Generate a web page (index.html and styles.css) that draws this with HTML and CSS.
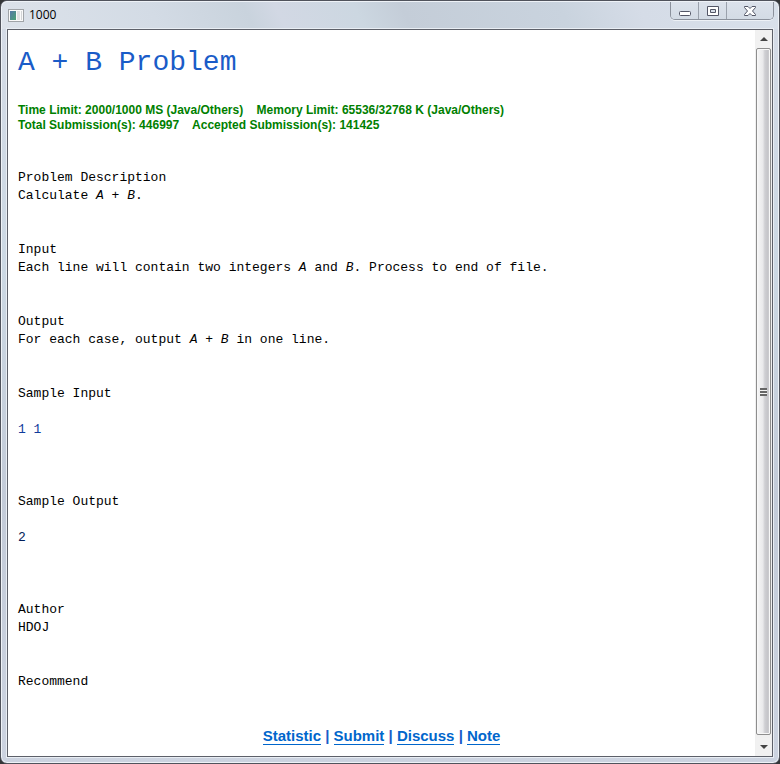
FILE: index.html
```html
<!DOCTYPE html>
<html lang="en">
<head>
<meta charset="utf-8">
<title>1000</title>
<link rel="stylesheet" href="styles.css">
</head>
<body>
<div class="window">
  <header class="titlebar">
    <svg class="app-icon" width="16" height="14" viewBox="0 0 16 14" aria-hidden="true">
      <defs><linearGradient id="pane" x1="0" y1="0" x2="1" y2="1"><stop offset="0" stop-color="#5578a8"/><stop offset="1" stop-color="#4ba273"/></linearGradient></defs>
      <rect x=".5" y=".5" width="15" height="12" fill="#fafafa" stroke="#a0a4a8"/>
      <rect x="2" y="2" width="6" height="9" fill="url(#pane)"/>
      <rect x="9" y="2" width="3" height="9" fill="#e0e1e2"/>
      <rect x="13" y="2" width="1" height="9" fill="#d2d4d6"/>
    </svg>
    <span class="caption">1000</span>
    <div class="controls">
      <button type="button" class="control" aria-label="Minimize">
        <svg width="14" height="12" viewBox="0 0 14 12"><rect x="1.5" y="6.500" width="11" height="4" rx="1" fill="#fff" stroke="#535666"/></svg>
      </button>
      <button type="button" class="control" aria-label="Maximize">
        <svg width="14" height="12" viewBox="0 0 14 12"><path d="M1.500 1.500h11v9h-11zM4.500 4.500v3h5v-3z" fill="#fff" fill-rule="evenodd" stroke="#535666" stroke-linejoin="round"/></svg>
      </button>
      <button type="button" class="control close" aria-label="Close">
        <svg width="14" height="12" viewBox="0 0 14 12"><path d="M1.500 1.500h3.500l2 2 2-2h3.500v1L9.500 6l3 3.500v1H9l-2-2-2 2H1.500v-1l3-3.500-3-3.500z" fill="#fff" stroke="#535666" stroke-linejoin="round"/></svg>
      </button>
    </div>
  </header>
  <div class="client">
    <main class="page">
      <h1>A + B Problem</h1>
      <p class="limits">Time Limit: 2000/1000 MS (Java/Others)&nbsp;&nbsp;&nbsp; Memory Limit: 65536/32768 K (Java/Others)<br>Total Submission(s): 446997&nbsp;&nbsp;&nbsp; Accepted Submission(s): 141425</p>
      <section><h2>Problem Description</h2><p>Calculate <i>A + B</i>.</p></section>
      <section><h2>Input</h2><p>Each line will contain two integers <i>A</i> and <i>B</i>. Process to end of file.</p></section>
      <section><h2>Output</h2><p>For each case, output <i>A + B</i> in one line.</p></section>
      <section><h2>Sample Input</h2><pre class="first">1 1</pre></section>
      <section><h2>Sample Output</h2><pre>2</pre></section>
      <section><h2>Author</h2><p>HDOJ</p></section>
      <section><h2>Recommend</h2></section>
      <nav class="links"><a href="#statistic">Statistic</a> | <a href="#submit">Submit</a> | <a href="#discuss">Discuss</a> | <a href="#note">Note</a></nav>
    </main>
    <div class="scrollbar">
      <button type="button" class="arrow" aria-label="Scroll up"><svg width="8" height="4" viewBox="0 0 8 4"><path d="M0 4l4-4 4 4z" fill="#444"/></svg></button>
      <div class="thumb"><span class="grip"></span></div>
      <button type="button" class="arrow" aria-label="Scroll down"><svg width="8" height="4" viewBox="0 0 8 4"><path d="M0 0l4 4 4-4z" fill="#444"/></svg></button>
    </div>
  </div>
</div>
</body>
</html>
```
FILE: styles.css
```css
* { box-sizing: border-box; }

body {
  margin: 0;
  background: #343638;
}

.window {
  display: flex;
  flex-direction: column;
  min-height: 100vh;
  padding: 0 6px 6px;
  border: 1px solid #50535c;
  border-radius: 7px;
  background: linear-gradient(180deg, #d5dbe6 0, #ccd8e3 35%, #c3cbd8 65%, #ccd3e0 100%);
  box-shadow: inset 0 0 0 1px #eef2f7;
}

.titlebar {
  display: flex;
  align-items: flex-start;
  height: 28px;
  margin: 0 -5px;
  padding: 0 4px 0 5px;
  border-top: 1px solid #eef2f7;
  border-radius: 6px 6px 0 0;
  background: linear-gradient(65deg, #dce2ea 0%, #d3dbe5 20%, #c9d3dd 32%, #d2d8e4 36%, #ccd7e1 46%, #c4cdd8 52%, #c9d3de 72%, #d5dce7 82%, #d8e0ea 100%);
}

.app-icon { margin: 7px 0 0 1px; }

.caption {
  margin: 4px 0 0 5px;
  font: 12px/18px "Open Sans", sans-serif;
  color: #000;
}

.controls {
  display: flex;
  height: 18px;
  margin-left: auto;
  border: 1px solid #8b919c;
  border-top: 0;
  border-radius: 0 0 5px 5px;
  box-shadow: 0 1px 0 #edf1f6;
  overflow: hidden;
}

.control {
  display: flex;
  align-items: center;
  justify-content: center;
  width: 28px;
  padding: 0;
  border: 0;
  border-right: 1px solid #9aa1ac;
  background: linear-gradient(#dce2eb, #d3dbe5);
}

.close {
  width: 46px;
  border-right: 0;
}

.client {
  display: flex;
  flex: 1;
  border: 1px solid #5d6069;
  background: #fff;
  box-shadow: 0 0 0 1px #e9eef4;
}

.page {
  flex: 1;
  padding: 17px 10px 11px;
  font: 13px/18px "Liberation Mono", monospace;
  color: #000;
}

h1 {
  margin: 0 0 24px;
  font-size: 28px;
  font-weight: 400;
  line-height: 32px;
  color: #1a5cc8;
}

.limits {
  margin: 0 0 36px;
  font: bold 12px/15px "Liberation Sans", sans-serif;
  color: #008000;
}

section { margin-bottom: 36px; }

h2, section p {
  margin: 0;
  font-size: 13px;
  font-weight: 400;
  line-height: 18px;
}

pre {
  margin: 18px 0 54px;
  font: 13px/18px "Liberation Mono", monospace;
  color: #001c58;
}

.first { color: #103c9c; }

.links {
  text-align: center;
  font: bold 15px/18px "Liberation Sans", sans-serif;
  color: #1a5cc8;
}

.links a {
  color: #0066cc;
  text-decoration: none;
  border-bottom: 1px solid #0066cc;
}

.scrollbar {
  display: flex;
  flex-direction: column;
  width: 17px;
  padding: 0 1px;
  background: #f0f0f0;
}

.arrow {
  display: flex;
  align-items: center;
  justify-content: center;
  height: 18px;
  padding: 0;
  border: 0;
  background: #f1f1f1;
}

.thumb {
  display: flex;
  flex: 1;
  align-items: center;
  justify-content: center;
  margin-bottom: 3px;
  border: 1px solid #8e8e8e;
  border-radius: 2px;
  background: linear-gradient(90deg, #f7f7f7, #e9e9eb 45%, #cfcfd3 60%, #c4c4c8 85%, #dedee0);
  box-shadow: inset 0 0 0 1px #f8f8f8;
}

.grip {
  width: 7px;
  height: 8px;
  background: repeating-linear-gradient(#666 0 2px, #f2f2f2 2px 3px);
}
```
